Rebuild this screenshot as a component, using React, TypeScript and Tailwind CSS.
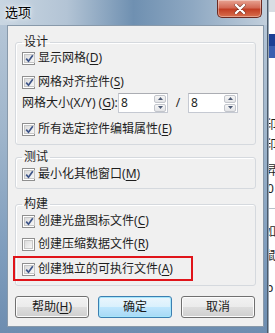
import React from 'react';

const font = "font-['Noto_Sans','Noto_Sans_CJK_SC',sans-serif]";

function CheckBox({ checked }: { checked: boolean }) {
  return (
    <span className="w-[13px] h-[13px] shrink-0 border border-[#8f8f8f] bg-white p-[1px] flex">
      <span className="flex-1 border border-[#c6c6c6] bg-[linear-gradient(135deg,#dcdcdc,#f7f7f7)] flex items-center justify-center">
        {checked && (
          <svg width="9" height="9" viewBox="0 0 9 9">
            <path d="M1.2 4.6 L3.5 7.2 L7.8 1.2" fill="none" stroke="#3d5488" strokeWidth="1.7" />
          </svg>
        )}
      </span>
    </span>
  );
}

function Acc({ label, k, rest = '' }: { label: string; k: string; rest?: string }) {
  return (
    <span>
      {label}(<span className="underline underline-offset-2">{k}</span>){rest}
    </span>
  );
}

function CheckRow({ checked, label, k, className = '' }: { checked: boolean; label: string; k: string; className?: string }) {
  return (
    <div className={`h-[16px] flex items-center gap-[3px] ${className}`}>
      <CheckBox checked={checked} />
      <Acc label={label} k={k} />
    </div>
  );
}

function SpinBox({ value }: { value: string }) {
  return (
    <div className="w-[50px] h-[20px] bg-white border border-[#c5c9d2] border-t-[#abadb3] flex items-center pl-[2px] pr-[1px]">
      <span className="flex-1 leading-[16px]">{value}</span>
      <div className="w-[12px] h-[17px] flex flex-col gap-[1px]">
        {[0, 1].map((i) => (
          <div key={i} className="flex-1 border border-[#c3c6cc] rounded-[2px] bg-[linear-gradient(#f6f6f6,#e3e4e7)] flex items-center justify-center">
            <svg width="5" height="3" viewBox="0 0 5 3">
              <path d={i === 0 ? 'M0 3 L2.5 0 L5 3 Z' : 'M0 0 L2.5 3 L5 0 Z'} fill="#4d5a75" />
            </svg>
          </div>
        ))}
      </div>
    </div>
  );
}

function Group({ title, className = '', children }: { title: string; className?: string; children: React.ReactNode }) {
  return (
    <fieldset className={`border border-[#d5d9de] rounded-[3px] pl-[6px] pr-[6px] shadow-[inset_1px_1px_0_white] ${className}`}>
      <legend className="px-[2px] leading-[16px]">{title}</legend>
      {children}
    </fieldset>
  );
}

function Button({ children, primary }: { children: React.ReactNode; primary?: boolean }) {
  return (
    <button
      className={`w-[74px] h-[22px] rounded-[3px] border flex items-center justify-center leading-[16px] text-[#1a1a1a] ${
        primary
          ? 'border-[#3c7fb1] bg-[linear-gradient(#eaf6fd_0%,#d9f0fc_50%,#bee6fd_51%,#a7d9f5_100%)] shadow-[inset_0_0_0_1px_#a6e6fb]'
          : 'border-[#707070] bg-[linear-gradient(#f2f2f2_0%,#ebebeb_50%,#dddddd_51%,#cfcfcf_100%)] shadow-[inset_0_0_0_1px_#fcfcfc]'
      }`}
    >
      {children}
    </button>
  );
}

export default function App() {
  return (
    <div className={`w-[275px] h-[333px] flex overflow-hidden text-[12px] text-[#1e1e1e] ${font}`}>
      <div className="w-[268px] flex flex-col bg-[linear-gradient(180deg,#b9c9d9_0%,#9fb5cb_40%,#7f9dbd_75%,#6d8db0_100%)] border-r border-[#4b5a6a]">
        <div className="h-[25px] flex items-start bg-[linear-gradient(90deg,#c9d6e2_0%,#b3c4d5_25%,#6f90b1_50%,#8ea8c2_72%,#c2cfdc_100%)]">
          <span className="ml-[5px] mt-[3px] text-[13px] leading-[18px] text-black [text-shadow:0_0_6px_#ffffff,0_0_3px_#ffffff]">选项</span>
          <div className="ml-auto mr-[5px] w-[45px] h-[18px] rounded-b-[5px] border border-t-0 border-[#6b2a22] bg-[linear-gradient(#e8a493_0%,#d36a55_45%,#c23e24_55%,#d8704f_100%)] flex items-center justify-center shadow-[inset_0_0_0_1px_rgba(255,255,255,0.35)]">
            <svg width="12" height="10" viewBox="0 0 12 10">
              <path d="M2 1 L10 9 M10 1 L2 9" stroke="#3a1a14" strokeWidth="3.6" strokeLinecap="round" opacity="0.5" />
              <path d="M2 1 L10 9 M10 1 L2 9" stroke="white" strokeWidth="2.4" strokeLinecap="round" />
            </svg>
          </div>
        </div>
        <div className="ml-[7px] mr-[3px] h-[302px] bg-[#f0f0f0] border border-[#8899aa] pl-[7px] pr-[7px] flex flex-col">
          <Group title="设计" className="mt-[8px] pb-[7px]">
            <CheckRow checked label="显示网格" k="D" />
            <CheckRow checked label="网格对齐控件" k="S" className="mt-[8px]" />
            <div className="mt-[3px] h-[20px] flex items-center">
              <span className="w-[96px]"><Acc label="网格大小(X/Y) " k="G" rest=":" /></span>
              <SpinBox value="8" />
              <span className="w-[20px] text-center">/</span>
              <SpinBox value="8" />
            </div>
            <CheckRow checked label="所有选定控件编辑属性" k="E" className="mt-[8px]" />
          </Group>
          <Group title="测试" className="mt-[4px] pb-[6px]">
            <CheckRow checked label="最小化其他窗口" k="M" className="mt-[1px]" />
          </Group>
          <Group title="构建" className="mt-[7px] pb-[8px]">
            <CheckRow checked label="创建光盘图标文件" k="C" className="mt-[1px]" />
            <CheckRow checked={false} label="创建压缩数据文件" k="R" className="mt-[7px]" />
            <div className="relative mt-[9px]">
              <CheckRow checked label="创建独立的可执行文件" k="A" />
              <span className="absolute left-[-9px] top-[-5px] w-[180px] h-[25px] border-[2px] border-[#e0141a] pointer-events-none" />
            </div>
          </Group>
          <div className="mt-[10px] flex gap-[9px]">
            <Button><Acc label="帮助" k="H" /></Button>
            <Button primary>确定</Button>
            <Button>取消</Button>
          </div>
        </div>
      </div>
      <div className="w-[7px] bg-white flex flex-col overflow-hidden text-[12px] leading-[14px] border-l border-[#9aa7b5]">
        <div className="h-[12px] bg-[#d8dde3]" />
        <div className="mt-[22px] h-[12px] bg-[#1c3f94]" />
        <div className="h-[12px] bg-[#3a5fb0]" />
        <span className="mt-[60px] -ml-[4px]">印</span>
        <span className="mt-[6px] -ml-[4px]">印</span>
        <span className="mt-[12px] -ml-[4px]">昇</span>
        <span className="mt-[4px] -ml-[2px]">0</span>
        <div className="mt-[12px] h-px bg-[#b9c1ca]" />
        <span className="mt-[16px] -ml-[5px]">如</span>
        <span className="mt-[10px] -ml-[5px]">鼠</span>
        <span className="mt-[18px] -ml-[3px]">p</span>
      </div>
    </div>
  );
}
